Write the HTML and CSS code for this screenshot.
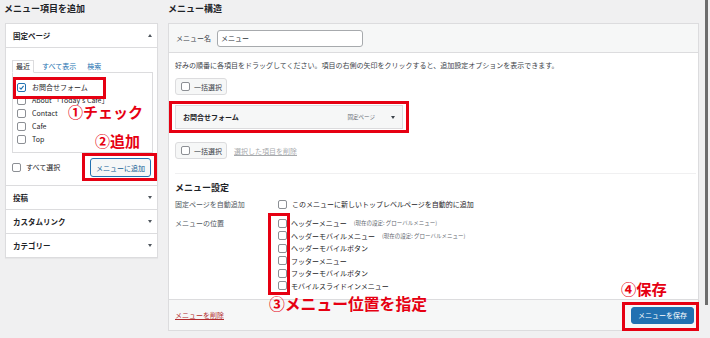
FILE: index.html
```html
<!DOCTYPE html>
<html lang="ja">
<head>
  <meta charset="UTF-8">
  <meta name="viewport" content="width=device-width, initial-scale=1.0">
  <title>メニュー</title>
  <link rel="stylesheet" href="styles.css">
</head>
<body>
  <div class="screen">
    <div class="left-col">
      <h2 class="col-title">メニュー項目を追加</h2>
      <div class="accordion">
        <div class="acc-section open">
          <div class="acc-head">固定ページ<span class="tri up"></span></div>
          <div class="acc-body">
            <ul class="tabs">
              <li class="active">最近</li>
              <li>すべて表示</li>
              <li>検索</li>
            </ul>
            <div class="tab-panel">
              <label class="check-row"><span class="cb checked"><svg viewBox="0 0 10 10"><path d="M2.2 5.2 4.3 7.3 8 2.8" fill="none" stroke="#2271b1" stroke-width="1.6"/></svg></span>お問合せフォーム</label>
              <label class="check-row"><span class="cb"></span>About 「Today's Cafe」</label>
              <label class="check-row"><span class="cb"></span>Contact</label>
              <label class="check-row"><span class="cb"></span>Cafe</label>
              <label class="check-row"><span class="cb"></span>Top</label>
            </div>
            <div class="acc-actions">
              <label class="check-row"><span class="cb"></span>すべて選択</label>
              <button class="btn btn-secondary">メニューに追加</button>
            </div>
          </div>
        </div>
        <div class="acc-section"><div class="acc-head">投稿<span class="tri"></span></div></div>
        <div class="acc-section"><div class="acc-head">カスタムリンク<span class="tri"></span></div></div>
        <div class="acc-section"><div class="acc-head">カテゴリー<span class="tri"></span></div></div>
      </div>
    </div>

    <div class="right-col">
      <h2 class="col-title">メニュー構造</h2>
      <div class="menu-panel">
        <div class="menu-head">
          <span class="head-label">メニュー名</span>
          <span class="name-input">メニュー</span>
        </div>
        <div class="menu-body">
          <p class="desc">好みの順番に各項目をドラッグしてください。項目の右側の矢印をクリックすると、追加設定オプションを表示できます。</p>
          <div class="bulk"><span class="cb"></span>一括選択</div>
          <div class="red-wrap">
            <div class="menu-item">
              <strong>お問合せフォーム</strong>
              <span class="item-type">固定ページ<span class="tri dark"></span></span>
            </div>
          </div>
          <div class="bulk-row">
            <div class="bulk"><span class="cb"></span>一括選択</div>
            <a class="link-disabled">選択した項目を削除</a>
          </div>
          <div class="settings">
            <h3>メニュー設定</h3>
            <div class="set-row first">
              <span class="set-label">固定ページを自動追加</span>
              <div class="set-field">
                <label class="loc-row"><span class="cb"></span>このメニューに新しいトップレベルページを自動的に追加</label>
              </div>
            </div>
            <div class="set-row">
              <span class="set-label">メニューの位置</span>
              <div class="set-field">
                <label class="loc-row"><span class="cb"></span>ヘッダーメニュー<small>(現在の設定: グローバルメニュー)</small></label>
                <label class="loc-row"><span class="cb"></span>ヘッダーモバイルメニュー<small>(現在の設定: グローバルメニュー)</small></label>
                <label class="loc-row"><span class="cb"></span>ヘッダーモバイルボタン</label>
                <label class="loc-row"><span class="cb"></span>フッターメニュー</label>
                <label class="loc-row"><span class="cb"></span>フッターモバイルボタン</label>
                <label class="loc-row"><span class="cb"></span>モバイルスライドインメニュー</label>
              </div>
            </div>
          </div>
        </div>
        <div class="menu-foot">
          <a class="delete-link">メニューを削除</a>
          <button class="btn btn-primary">メニューを保存</button>
        </div>
      </div>
    </div>

    <div class="scrollbar"><div class="thumb"></div></div>

    <!-- annotations -->
    <div class="mark mark-check"></div>
    <div class="mark mark-add"></div>
    <div class="mark mark-locations"></div>
    <div class="mark mark-save"></div>
    <div class="note note-1">①チェック</div>
    <div class="note note-2">②追加</div>
    <div class="note note-3">③メニュー位置を指定</div>
    <div class="note note-4">④保存</div>
  </div>
</body>
</html>
```

FILE: styles.css
```css
* {
  box-sizing: border-box;
}
body {
  margin: 0;
  font-family: "Noto Sans CJK JP", "Noto Sans", sans-serif;
  color: #1d2327;
  background-color: #f0f0f1;
}
.screen {
  position: relative;
  display: flex;
  width: 710px;
  height: 338px;
  overflow: hidden;
  background-color: #f0f0f1;
}
.col-title {
  margin: 0;
  height: 23px;
  line-height: 18px;
  font-size: 9px;
  font-weight: 700;
}

/* left column */
.left-col {
  width: 168px;
  flex-shrink: 0;
}
.left-col .col-title {
  padding-left: 4px;
}
.accordion {
  width: 153px;
  margin-left: 5px;
  background-color: #fff;
  border: 1px solid #dcdcde;
  box-shadow: 0 1px 1px rgba(0, 0, 0, 0.04);
}
.acc-section {
  border-bottom: 1px solid #dcdcde;
}
.acc-section:last-child {
  border-bottom: none;
}
.acc-head {
  display: flex;
  justify-content: space-between;
  align-items: center;
  height: 23px;
  padding: 0 5px 0 7px;
  font-size: 7.5px;
  font-weight: 700;
}
.open .acc-head {
  height: 24px;
  border-bottom: 1px solid #dcdcde;
}
.tri {
  width: 0;
  height: 0;
  border-left: 2.5px solid transparent;
  border-right: 2.5px solid transparent;
  border-top: 3px solid #50575e;
}
.tri.up {
  border-top: none;
  border-bottom: 3px solid #50575e;
}
.tri.dark {
  margin-left: 16px;
  border-top: 3px solid #3c434a;
}
.acc-body {
  padding: 12px 4px 0 6px;
}
.tabs {
  display: flex;
  margin: 0;
  padding: 0;
  list-style: none;
  height: 12px;
  font-size: 7px;
}
.tabs li {
  padding: 1px 3px 0;
  margin-right: 5px;
  line-height: 11px;
  color: #2271b1;
}
.tabs li.active {
  position: relative;
  z-index: 1;
  height: 13px;
  padding-top: 0;
  border: 1px solid #dcdcde;
  border-bottom-color: #fff;
  background-color: #fff;
  color: #1d2327;
}
.tab-panel {
  height: 81px;
  padding: 8px 4px 6px;
  border: 1px solid #dcdcde;
}
.check-row {
  display: flex;
  align-items: center;
  gap: 6px;
  height: 13px;
  font-size: 7px;
  line-height: 9px;
  white-space: nowrap;
}
.cb {
  display: inline-block;
  flex-shrink: 0;
  width: 9px;
  height: 9px;
  border: 1px solid #8c8f94;
  border-radius: 2px;
  background-color: #fff;
}
.cb svg {
  display: block;
  width: 7px;
  height: 7px;
}
.cb.checked {
  border-color: #2271b1;
}
.acc-actions {
  display: flex;
  justify-content: space-between;
  align-items: center;
  padding: 5px 2px 8px 0;
}
.acc-actions .check-row {
  gap: 5px;
}
.btn {
  font-family: inherit;
  font-size: 7px;
  height: 19px;
  padding: 0 5px;
  border-radius: 3px;
  cursor: pointer;
}
.btn-secondary {
  color: #135e96;
  background-color: #f6f7f7;
  border: 1px solid #2271b1;
}
.btn-primary {
  height: 17px;
  padding: 0 6px;
  color: #fff;
  background-color: #2271b1;
  border: 1px solid #2271b1;
}

/* right column */
.right-col {
  width: 531px;
  flex-shrink: 0;
}
.menu-panel {
  display: flex;
  flex-direction: column;
  height: 308px;
  background-color: #fff;
  border: 1px solid #dcdcde;
}
.menu-head {
  display: flex;
  align-items: center;
  gap: 6px;
  height: 29px;
  padding: 0 7px;
  background-color: #f6f7f7;
  border-bottom: 1px solid #dcdcde;
  font-size: 7px;
  color: #3c434a;
}
.name-input {
  width: 146px;
  height: 17px;
  padding-left: 3px;
  line-height: 15px;
  background-color: #fff;
  border: 1px solid #a7aaad;
  border-radius: 3px;
  color: #2c3338;
}
.menu-body {
  flex: 1;
  padding: 6px 2px 0 6px;
  font-size: 7px;
}
.desc {
  margin: 0;
  line-height: 12px;
  color: #3c434a;
  white-space: nowrap;
}
.bulk {
  display: flex;
  align-items: center;
  gap: 4px;
  width: max-content;
  height: 17px;
  margin-top: 7px;
  padding: 0 4px 0 5px;
  background-color: #f6f7f7;
  border: 1px solid #dcdcde;
  border-radius: 3px;
  color: #3c434a;
}
.red-wrap {
  width: 240px;
  margin: 6px 0 0 -6px;
  padding: 1px 3px;
  border: 3px solid #e60012;
}
.menu-item {
  display: flex;
  justify-content: space-between;
  align-items: center;
  height: 24px;
  padding: 0 7px 0 7px;
  background-color: #f6f7f7;
  border: 1px solid #dcdcde;
}
.menu-item strong {
  font-size: 7px;
}
.item-type {
  display: flex;
  align-items: center;
  font-size: 5.5px;
  color: #646970;
}
.bulk-row {
  display: flex;
  align-items: center;
  gap: 7px;
  margin-top: 9px;
}
.bulk-row .bulk {
  margin-top: 0;
}
.link-disabled {
  color: #a7aaad;
  text-decoration: underline;
}
.settings {
  margin-top: 14px;
  padding-top: 8px;
  border-top: 1px solid #f0f0f1;
}
.settings h3 {
  margin: 0;
  font-size: 9px;
  line-height: 12px;
}
.set-row {
  display: flex;
  margin-top: 7px;
}
.set-row.first {
  margin-top: 4px;
}
.set-label {
  width: 103px;
  flex-shrink: 0;
  line-height: 12px;
  color: #50575e;
}
.loc-row {
  display: flex;
  align-items: center;
  gap: 4px;
  height: 12.5px;
  white-space: nowrap;
}
.set-row.first .loc-row {
  height: 12px;
  gap: 5px;
}
.loc-row small {
  font-size: 5.5px;
  color: #646970;
  margin-left: 3px;
}
.menu-foot {
  display: flex;
  justify-content: space-between;
  align-items: center;
  height: 31px;
  padding: 0 4px 0 6px;
  background-color: #f6f7f7;
  border-top: 1px solid #dcdcde;
}
.delete-link {
  font-size: 7px;
  color: #b32d2e;
  text-decoration: underline;
}

/* scrollbar */
.scrollbar {
  width: 11px;
  flex-shrink: 0;
}
.thumb {
  width: 3px;
  height: 305px;
  margin-left: 6px;
  background-color: #6d6d6d;
}

/* red annotations */
.mark {
  position: absolute;
  border: 3px solid #e60012;
}
.mark-check {
  left: 13px;
  top: 77px;
  width: 93px;
  height: 22px;
}
.mark-add {
  left: 82px;
  top: 153px;
  width: 75px;
  height: 28px;
}
.mark-locations {
  left: 268px;
  top: 213px;
  width: 22px;
  height: 82px;
}
.mark-save {
  left: 622px;
  top: 302px;
  width: 77px;
  height: 29px;
}
.note {
  position: absolute;
  color: #e60012;
  font-size: 15px;
  font-weight: 700;
  line-height: 15px;
  white-space: nowrap;
}
.note-1 {
  left: 68px;
  top: 105.5px;
  line-height: 12px;
}
.note-2 {
  left: 95px;
  top: 133px;
}
.note-3 {
  left: 269px;
  top: 296px;
  font-size: 15.8px;
}
.note-4 {
  left: 621px;
  top: 281px;
  font-size: 15.3px;
}
```
